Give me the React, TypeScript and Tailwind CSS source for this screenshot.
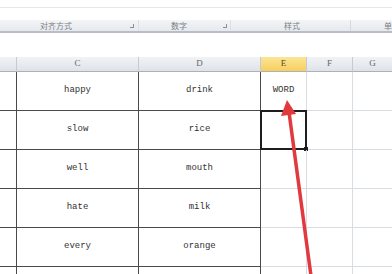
import React from "react";

const rows = [
  ["happy", "drink", "WORD"],
  ["slow", "rice", ""],
  ["well", "mouth", ""],
  ["hate", "milk", ""],
  ["every", "orange", ""],
];

export default function App() {
  const mono = { fontFamily: '"Liberation Mono", "DejaVu Sans Mono", monospace' };
  const cjk = { fontFamily: '"Noto Sans CJK SC", "Noto Sans", sans-serif' };
  return (
    <div className="relative w-[392px] h-[274px] overflow-hidden bg-white">
      {/* ribbon */}
      <div className="h-[7px] bg-white" />
      <div className="h-px bg-[#e3e6ea]" />
      <div className="h-[12px] bg-white" />
      <div
        className="h-[11px] flex bg-gradient-to-b from-[#f3f5f7] to-[#e6e9ed] text-[8px] leading-[11px] text-[#7a7e84]"
        style={cjk}
      >
        <div className="w-[138px] flex items-center relative">
          <span className="absolute left-[40px]">对齐方式</span>
          <span className="absolute left-[130px] w-[4px] h-[4px] border-r border-b border-[#8a9098] top-[4px]" />
        </div>
        <div className="w-[92px] flex items-center relative border-l border-[#dde0e4]">
          <span className="absolute left-[32px]">数字</span>
          <span className="absolute left-[84px] w-[4px] h-[4px] border-r border-b border-[#8a9098] top-[4px]" />
        </div>
        <div className="w-[120px] flex items-center relative border-l border-[#dde0e4]">
          <span className="absolute left-[53px]">样式</span>
        </div>
        <div className="flex-1 relative border-l border-[#d5d9de]">
          <span className="absolute left-[33px]">单</span>
        </div>
      </div>
      <div className="h-[2px] bg-[#b8bec6]" />
      <div className="h-[24px] bg-white" />
      {/* sheet */}
      <div className="grid grid-cols-[17px_122px_122px_46px_46px_1fr]">
        {["", "C", "D", "E", "F", "G"].map((h, i) => (
          <div
            key={i}
            className={`h-[15px] flex items-center justify-center text-[9px] border-b border-[#a9b1bc] ${
              i < 5 ? "border-r border-r-[#c5cbd3]" : ""
            } ${
              h === "E"
                ? "bg-gradient-to-b from-[#fbe595] to-[#f6cf5c] text-[#5a4a20]"
                : "bg-gradient-to-b from-[#f1f3f6] to-[#dfe3e8] text-[#666]"
            }`}
            style={{ fontFamily: '"Liberation Serif", serif' }}
          >
            {h}
          </div>
        ))}
        {rows.map((r, ri) => (
          <React.Fragment key={ri}>
            <div className="h-[39px] border-b border-r border-[#4a4a4a]" />
            <div
              className="h-[39px] border-b border-r border-[#4a4a4a] flex items-center justify-center text-[9px] text-[#333]"
              style={mono}
            >
              {r[0]}
            </div>
            <div
              className="h-[39px] border-b border-r border-[#4a4a4a] flex items-center justify-center text-[9px] text-[#333]"
              style={mono}
            >
              {r[1]}
            </div>
            <div
              className="relative h-[39px] border-b border-r border-[#d8dde4] flex items-center justify-center text-[9px] text-[#333]"
              style={mono}
            >
              {r[2]}
              {ri === 1 && (
                <div className="absolute -left-[1px] -top-[1px] w-[47px] h-[40px] border-2 border-[#1e1e1e]">
                  <div className="absolute -right-[3px] -bottom-[3px] w-[4px] h-[4px] bg-[#1e1e1e]" />
                </div>
              )}
            </div>
            <div className="h-[39px] border-b border-r border-[#d8dde4]" />
            <div className="h-[39px] border-b border-[#d8dde4]" />
          </React.Fragment>
        ))}
        <div className="h-[10px] border-r border-[#4a4a4a]" />
        <div className="h-[10px] border-r border-[#4a4a4a]" />
        <div className="h-[10px] border-r border-[#4a4a4a]" />
        <div className="h-[10px] border-r border-[#d8dde4]" />
        <div className="h-[10px] border-r border-[#d8dde4]" />
        <div className="h-[10px]" />
      </div>
      {/* red arrow */}
      <svg className="absolute left-0 top-0" width="392" height="274" viewBox="0 0 392 274">
        <line x1="311" y1="276" x2="289" y2="112" stroke="#e0393e" strokeWidth="3.5" strokeLinecap="round" />
        <polygon points="287,100 281,116 296,114" fill="#e0393e" />
      </svg>
    </div>
  );
}
